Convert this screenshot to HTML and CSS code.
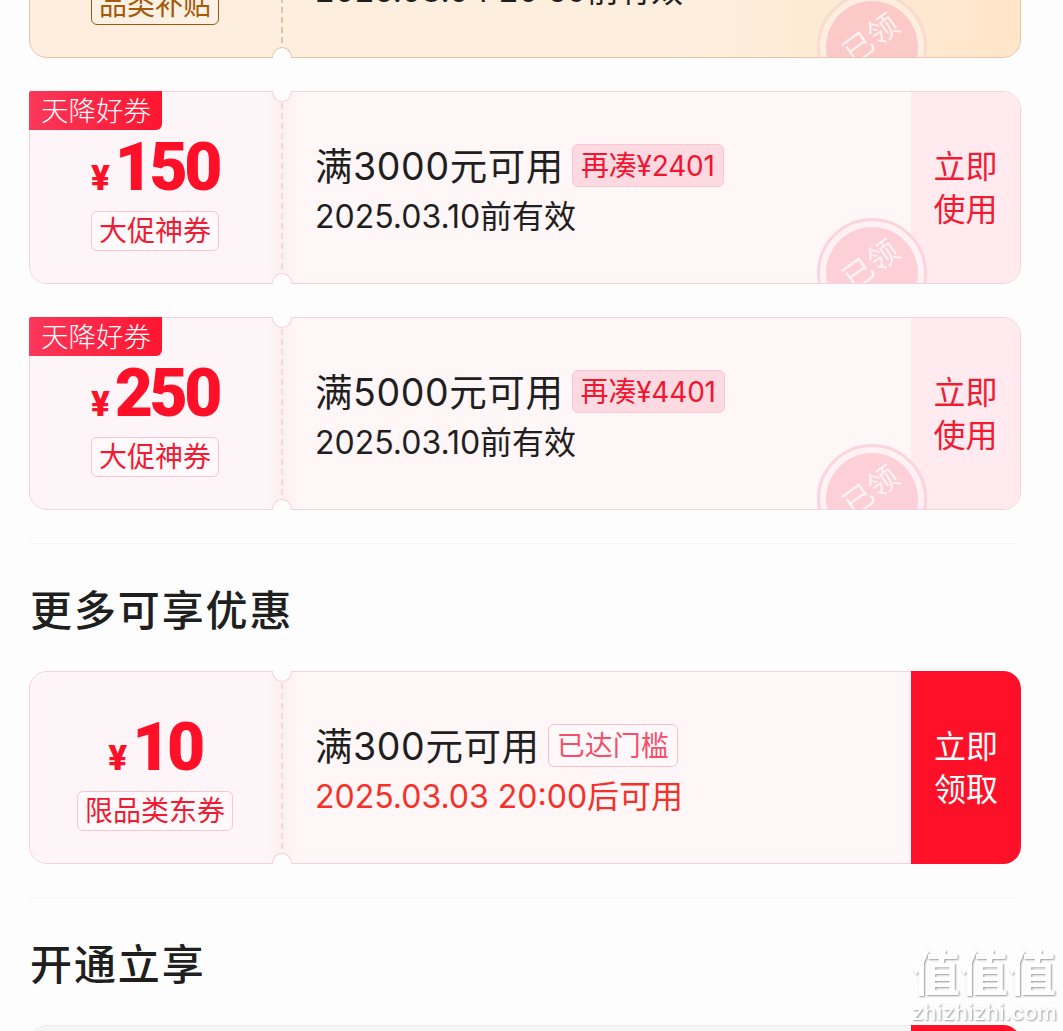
FILE: index.html
```html
<!DOCTYPE html>
<html lang="zh">
<head>
  <meta charset="UTF-8">
  <title>优惠券</title>
  <link rel="stylesheet" href="styles.css">
</head>
<body>
  <div class="page">

    <div class="coupon gold">
      <div class="coupon-left">
        <div class="price"><span class="yen">¥</span><span class="num">100</span></div>
        <div class="tag">品类补贴</div>
        <i class="dash"></i>
        <i class="notch notch-top"></i>
        <i class="notch notch-bottom"></i>
      </div>
      <div class="coupon-mid">
        <div class="line-main"><span>满1000元可用</span></div>
        <div class="line-date">2025.03.04 20:59前有效</div>
      </div>
      <div class="coupon-btn">立即<br>使用</div>
      <div class="stamp-clip"><div class="stamp"><span>已领</span></div></div>
    </div>

    <div class="coupon">
      <div class="coupon-left">
        <div class="corner">天降好券</div>
        <div class="price"><span class="yen">¥</span><span class="num">150</span></div>
        <div class="tag">大促神券</div>
        <i class="dash"></i>
        <i class="notch notch-top"></i>
        <i class="notch notch-bottom"></i>
      </div>
      <div class="coupon-mid">
        <div class="line-main"><span>满3000元可用</span><em class="badge">再凑¥2401</em></div>
        <div class="line-date">2025.03.10前有效</div>
      </div>
      <div class="coupon-btn">立即<br>使用</div>
      <div class="stamp-clip"><div class="stamp"><span>已领</span></div></div>
    </div>

    <div class="coupon">
      <div class="coupon-left">
        <div class="corner">天降好券</div>
        <div class="price"><span class="yen">¥</span><span class="num">250</span></div>
        <div class="tag">大促神券</div>
        <i class="dash"></i>
        <i class="notch notch-top"></i>
        <i class="notch notch-bottom"></i>
      </div>
      <div class="coupon-mid">
        <div class="line-main"><span>满5000元可用</span><em class="badge">再凑¥4401</em></div>
        <div class="line-date">2025.03.10前有效</div>
      </div>
      <div class="coupon-btn">立即<br>使用</div>
      <div class="stamp-clip"><div class="stamp"><span>已领</span></div></div>
    </div>

    <div class="divider"></div>
    <h2 class="section-title">更多可享优惠</h2>

    <div class="coupon">
      <div class="coupon-left">
        <div class="price"><span class="yen">¥</span><span class="num">10</span></div>
        <div class="tag">限品类东券</div>
        <i class="dash"></i>
        <i class="notch notch-top"></i>
        <i class="notch notch-bottom"></i>
      </div>
      <div class="coupon-mid">
        <div class="line-main"><span>满300元可用</span><em class="badge badge-line">已达门槛</em></div>
        <div class="line-date line-red">2025.03.03 20:00后可用</div>
      </div>
      <div class="coupon-btn btn-red">立即<br>领取</div>
    </div>

    <div class="divider"></div>
    <h2 class="section-title">开通立享</h2>

    <div class="coupon coupon-grey">
      <div class="coupon-left"></div>
      <div class="coupon-mid"></div>
      <div class="coupon-btn btn-red"></div>
    </div>
  </div>

  <!-- 水印 -->
  <div class="watermark">
    <div class="wm-big">值值值</div>
    <div class="wm-small">zhizhizhi.com</div>
  </div>
</body>
</html>
```

FILE: styles.css
```css
* {
  box-sizing: border-box;
}
html, body {
  margin: 0;
  height: 100%;
  overflow: hidden;
}
body {
  background: #fdfdfd;
  color: #1f1f1f;
  font-family: Inter, "Noto Sans CJK SC", sans-serif;
}
.page {
  margin-top: -135px;
  padding: 0 42px 0 29px;
}

/* coupon */
.coupon {
  position: relative;
  display: flex;
  height: 193px;
  margin-bottom: 33px;
  background: #fff6f8;
  border: 1px solid #f6d0da;
  border-radius: 18px;
}
.coupon-left {
  position: relative;
  flex: none;
  width: 253px;
  padding: 43px 3px 0 0;
  display: flex;
  flex-direction: column;
  align-items: center;
  border-radius: 17px 0 0 17px;
  background: linear-gradient(to right, #fdf5f7 238px, #fbeff1 253px);
}
.dash {
  position: absolute;
  top: 11px;
  bottom: 11px;
  left: 251px;
  width: 2px;
  background: repeating-linear-gradient(to bottom, #f8d7dc 0, #f8d7dc 6px, transparent 6px, transparent 10px);
}
.notch {
  position: absolute;
  left: 242px;
  width: 20px;
  height: 11px;
  background: #fdfdfd;
  border: 1px solid #f6d0da;
}
.notch-top {
  top: -1px;
  border-top: 0;
  border-radius: 0 0 10px 10px;
}
.notch-bottom {
  bottom: -1px;
  border-bottom: 0;
  border-radius: 10px 10px 0 0;
}
.corner {
  position: absolute;
  top: -1px;
  left: -1px;
  width: 133px;
  height: 39px;
  line-height: 40px;
  padding-left: 12px;
  font-size: 27.5px;
  color: #fff;
  background: linear-gradient(to right, #f9385a, #fe1530);
  border-radius: 2px 0 6px 0;
  font-weight: 300;
}
.price {
  display: flex;
  align-items: baseline;
  height: 76px;
  color: #fe1128;
  font-family: Roboto, sans-serif;
  font-weight: 900;
}
.yen {
  font-size: 35px;
  margin-right: 5px;
}
.num {
  font-size: 66px;
  line-height: 66px;
  letter-spacing: -3.5px;
}
.tag {
  height: 40px;
  line-height: 38px;
  padding: 0 7px;
  font-size: 28px;
  color: #f01c34;
  background: #fff9fb;
  border: 1px solid #f8c6d0;
  border-radius: 6px;
}
.coupon-mid {
  flex: 1;
  padding: 49px 0 0 32px;
  background: linear-gradient(to right, #fbeff1, transparent 15px);
}
.line-main {
  display: flex;
  align-items: center;
  height: 48px;
  font-size: 37.5px;
  letter-spacing: .6px;
}
.line-main span {
  margin-bottom: 3px;
}
.line-date {
  margin-top: 7px;
  font-size: 32px;
  line-height: 42px;
}
.line-red {
  color: #f5312a;
}
.badge {
  margin-left: 8px;
  height: 43px;
  line-height: 43px;
  padding: 0 8px;
  font-style: normal;
  font-size: 28px;
  letter-spacing: -.2px;
  color: #f01530;
  background: #fdd9e1;
  border: 1px solid #fbc6d3;
  border-radius: 6px;
}
.badge-line {
  letter-spacing: 0;
  color: #f5506a;
  background: #fff8fa;
  border-color: #f8c0cd;
}

/* 已领 stamp, cut off by the bottom of the card */
.stamp-clip {
  position: absolute;
  right: 93px;
  bottom: 0;
  width: 110px;
  height: 65px;
  overflow: hidden;
}
.stamp {
  width: 110px;
  height: 110px;
  padding: 6px;
  border-radius: 50%;
  border: 3px solid #fbd5dc;
  background: #fff1f4;
}
.stamp span {
  display: block;
  height: 92px;
  line-height: 76px;
  text-align: center;
  text-indent: 8px;
  font-size: 30px;
  border-radius: 50%;
  color: rgba(255, 255, 255, .75);
  background: #fdd0d8;
  transform: rotate(-36deg);
}
.coupon-btn {
  flex: none;
  width: 109px;
  display: flex;
  align-items: center;
  justify-content: center;
  text-align: center;
  font-size: 32px;
  line-height: 43px;
  color: #f01c34;
  background: #ffeaf0;
  border-radius: 0 17px 17px 0;
}
.btn-red {
  margin: -1px -1px -1px 0;
  width: 110px;
  border-radius: 0 18px 18px 0;
  color: #fff;
  background: #fe1128;
}

/* gold coupon at the top */
.gold {
  background: linear-gradient(to right, #fdeedd 0, #fdeedd 65%, #ffe6ca 100%);
  border-color: #e6c6a6;
}
.gold .coupon-left,
.gold .coupon-mid,
.gold .coupon-btn {
  background: none;
}
.gold .dash {
  background: repeating-linear-gradient(to bottom, #dfc3a5 0, #dfc3a5 6px, transparent 6px, transparent 10px);
}
.gold .notch {
  border-color: #e6c6a6;
}
.gold .tag {
  color: #a5590c;
  background: #fdf1e3;
  border-color: #9c5a10;
}
.gold .stamp {
  border-color: #f9dccf;
  background: #fdeee0;
}
.gold .stamp span {
  background: #fcc9c9;
}

.coupon-grey {
  background: #f6f6f6;
  border-color: #ebebeb;
}
.coupon-grey .coupon-left,
.coupon-grey .coupon-mid {
  background: none;
}

.divider {
  height: 1px;
  background: #f7f7f7;
}
.section-title {
  margin: 0;
  height: 127px;
  padding-left: 1px;
  line-height: 134px;
  font-size: 42px;
  font-weight: 500;
  letter-spacing: 1.9px;
}

/* watermark */
.watermark {
  position: fixed;
  left: 911px;
  top: 949px;
  width: 146px;
  text-align: center;
  color: #fff;
  text-shadow: 1px 1px 2px #9a9a9a;
}
.wm-big {
  font-size: 48px;
  font-weight: 700;
  line-height: 50px;
  white-space: nowrap;
}
.wm-small {
  font-size: 22px;
  line-height: 26px;
  font-weight: 500;
}
```
